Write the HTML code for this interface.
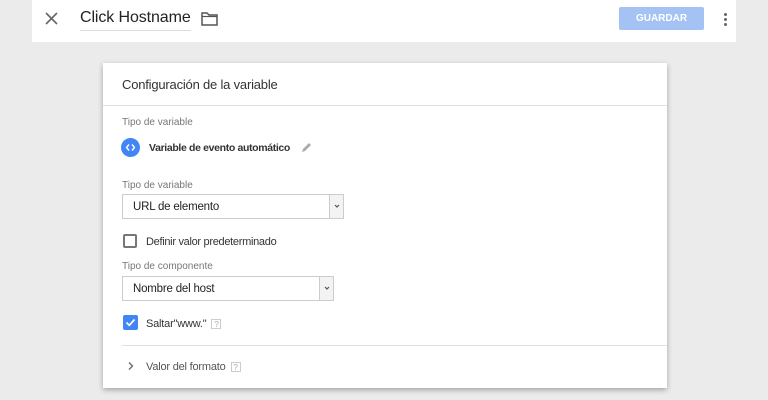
<!DOCTYPE html>
<html><head><meta charset="utf-8"><style>
*{margin:0;padding:0;box-sizing:border-box}
body{width:768px;height:400px;background:#ebebeb;font-family:"Liberation Sans",sans-serif;position:relative;overflow:hidden;color:#222}
.a{position:absolute}
.hdr{left:32px;top:0;width:704px;height:42px;background:#fff}
.card{left:103px;top:63px;width:564px;height:325px;background:#fff;box-shadow:0 2px 5px rgba(0,0,0,.3)}
.lbl{font-size:10px;color:#777}
.sel{border:1px solid #ccc;height:25px;font-size:11.5px;padding:6px 10px;color:#222;letter-spacing:-0.2px}
.sel .arr{position:absolute;right:0;top:0;width:14px;height:23px;border-left:1px solid #ccc;background:#f3f3f3}
.q{display:inline-block;width:10px;height:10px;border:1px solid #ccc;font-size:8px;color:#aaa;text-align:center;line-height:9px;vertical-align:middle;margin-left:5px}
</style></head><body>
<div class="a hdr"></div>
<svg class="a" style="left:45px;top:12px" width="13" height="13" viewBox="0 0 13 13"><path d="M1 1L12 12M12 1L1 12" stroke="#666" stroke-width="1.6"/></svg>
<div class="a" style="left:80px;top:9px;font-size:16px;color:#222;border-bottom:1px solid #ddd;padding-bottom:3px;letter-spacing:-0.1px">Click Hostname</div>
<svg class="a" style="left:201px;top:12px" width="17" height="14" viewBox="0 0 17 14"><path d="M1 1H6L8 3H16V13H1Z" fill="none" stroke="#555" stroke-width="1.5"/><path d="M1 4.5H16" stroke="#555" stroke-width="1.2"/></svg>
<div class="a" style="left:619px;top:7px;width:85px;height:23px;background:#a4c2f4;border-radius:2px;color:#fff;font-size:10px;font-weight:bold;text-align:center;line-height:23px">GUARDAR</div>
<div class="a" style="left:724px;top:13px;width:3px;height:3px;border-radius:2px;background:#666"></div>
<div class="a" style="left:724px;top:18px;width:3px;height:3px;border-radius:2px;background:#666"></div>
<div class="a" style="left:724px;top:23px;width:3px;height:3px;border-radius:2px;background:#666"></div>
<div class="a card"></div>
<div class="a" style="left:122px;top:77px;font-size:13px;color:#333;letter-spacing:-0.2px">Configuración de la variable</div>
<div class="a" style="left:103px;top:105px;width:564px;height:1px;background:#e0e0e0"></div>
<div class="a lbl" style="left:122px;top:117px">Tipo de variable</div>
<div class="a" style="left:121px;top:138px;width:19px;height:19px;border-radius:50%;background:#4285f4"></div>
<svg class="a" style="left:121px;top:138px" width="19" height="19" viewBox="0 0 19 19"><path d="M8 6.5L5.5 9.5L8 12.5M11 6.5L13.5 9.5L11 12.5" fill="none" stroke="#fff" stroke-width="1.4"/></svg>
<div class="a" style="left:149px;top:142px;font-size:10.5px;font-weight:bold;color:#333;letter-spacing:-0.35px">Variable de evento automático</div>
<svg class="a" style="left:301px;top:142px" width="11" height="11" viewBox="0 0 11 11"><path d="M1 10L2 7L8 1L10 3L4 9Z" fill="#aaa"/></svg>
<div class="a lbl" style="left:122px;top:180px">Tipo de variable</div>
<div class="a sel" style="left:122px;top:194px;width:222px">URL de elemento<div class="arr"><svg width="14" height="23" viewBox="0 0 14 23"><path d="M5 10L7 12L9 10" fill="none" stroke="#555" stroke-width="1.2"/></svg></div></div>
<div class="a" style="left:123px;top:234px;width:14px;height:14px;border:2px solid #777;border-radius:2px"></div>
<div class="a" style="left:146px;top:236px;font-size:11px;color:#333;letter-spacing:-0.3px">Definir valor predeterminado</div>
<div class="a lbl" style="left:122px;top:261px">Tipo de componente</div>
<div class="a sel" style="left:122px;top:276px;width:212px">Nombre del host<div class="arr"><svg width="14" height="23" viewBox="0 0 14 23"><path d="M5 10L7 12L9 10" fill="none" stroke="#555" stroke-width="1.2"/></svg></div></div>
<div class="a" style="left:123px;top:315px;width:15px;height:15px;background:#4285f4;border-radius:2px"></div>
<svg class="a" style="left:125px;top:317px" width="11" height="11" viewBox="0 0 11 11"><path d="M1.5 5.5L4.3 8.3L9.5 2.5" fill="none" stroke="#fff" stroke-width="1.7"/></svg>
<div class="a" style="left:146px;top:318px;font-size:11px;color:#333;letter-spacing:-0.2px">Saltar"www."<span class="q">?</span></div>
<div class="a" style="left:122px;top:345px;width:545px;height:1px;background:#e0e0e0"></div>
<svg class="a" style="left:127px;top:361px" width="8" height="10" viewBox="0 0 8 10"><path d="M2 1.5L5.5 5L2 8.5" fill="none" stroke="#666" stroke-width="1.3"/></svg>
<div class="a" style="left:146px;top:361px;font-size:11px;color:#555;letter-spacing:-0.2px">Valor del formato<span class="q">?</span></div>
</body></html>
